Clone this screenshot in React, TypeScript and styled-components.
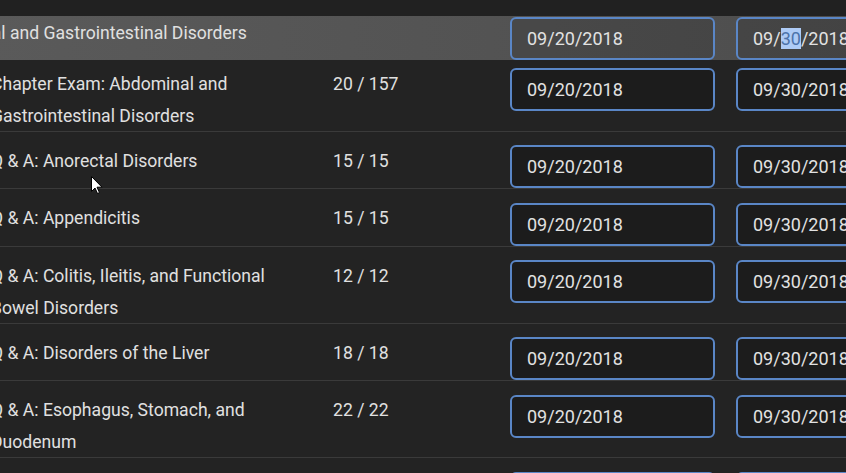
import React from "react";
import styled, { createGlobalStyle } from "styled-components";

const GlobalStyle = createGlobalStyle`
  html, body { margin: 0; padding: 0; background: #232323; overflow: hidden; }
  * { box-sizing: border-box; }
`;

const Page = styled.div`
  position: relative;
  width: 846px;
  height: 473px;
  overflow: hidden;
  background: #232323;
  font-family: Roboto, "Liberation Sans", sans-serif;
  color: #e0e0e0;
`;

const TopStrip = styled.div`
  height: 16px;
  background: #212121;
`;

const Table = styled.div`
  margin-left: -9px;
  width: 1000px;
`;

const cols = "342px 177px 226px 226px";

const HeaderRow = styled.div`
  position: relative;
  z-index: 1;
  display: grid;
  grid-template-columns: ${cols};
  height: 44px;
  background: linear-gradient(90deg, #5a5a5a 0%, #535353 50%, #4b4b4b 100%);
`;

const HeaderTitle = styled.div`
  padding-top: 1px;
  font-size: 17.6px;
  line-height: 32px;
  white-space: nowrap;
  margin-left: -70px;
`;

const Body = styled.div`
  margin-top: -5px;
`;

const Row = styled.div`
  display: grid;
  grid-template-columns: ${cols};
  border-bottom: 1px solid #3a3a3a;
`;

const TitleCell = styled.div`
  padding: 13px 18px 0 0;
  margin-bottom: -1px;
  font-size: 17.6px;
  line-height: 32px;
`;

const CountCell = styled.div`
  padding-top: 13px;
  font-size: 17.6px;
  line-height: 32px;
`;

const InputCell = styled.div<{ $top: number }>`
  padding-top: ${(p) => p.$top}px;
`;

const DateField = styled.div<{ $onHeader?: boolean }>`
  width: 205px;
  height: 43px;
  border: 2px solid #5a86c6;
  border-radius: 6px;
  background: ${(p) => (p.$onHeader ? "rgba(0,0,0,0.12)" : "#1c1c1c")};
  padding-left: 15px;
  font-size: 18px;
  line-height: 39px;
  color: #e2e2e2;
  white-space: nowrap;
`;

const Selected = styled.span`
  background: #aecbf6;
  color: #4d73aa;
`;

const Cursor = styled.svg`
  position: absolute;
  left: 91px;
  top: 176px;
  z-index: 2;
`;

const rows = [
  { title: "Chapter Exam: Abdominal and Gastrointestinal Disorders", count: "20 / 157" },
  { title: "Q & A: Anorectal Disorders", count: "15 / 15" },
  { title: "Q & A: Appendicitis", count: "15 / 15" },
  { title: "Q & A: Colitis, Ileitis, and Functional Bowel Disorders", count: "12 / 12" },
  { title: "Q & A: Disorders of the Liver", count: "18 / 18" },
  { title: "Q & A: Esophagus, Stomach, and Duodenum", count: "22 / 22" },
  { title: "Q & A: Gallbladder and Bile Ducts", count: "14 / 14" },
];

export default function App() {
  return (
    <Page>
      <GlobalStyle />
      <TopStrip />
      <Table>
        <HeaderRow>
          <HeaderTitle>Abdominal and Gastrointestinal Disorders</HeaderTitle>
          <div />
          <InputCell $top={1}>
            <DateField $onHeader>09/20/2018</DateField>
          </InputCell>
          <InputCell $top={1}>
            <DateField $onHeader>
              09/<Selected>30</Selected>/2018
            </DateField>
          </InputCell>
        </HeaderRow>
        <Body>
          {rows.map((r) => (
            <Row key={r.title}>
              <TitleCell>{r.title}</TitleCell>
              <CountCell>{r.count}</CountCell>
              <InputCell $top={13.4}>
                <DateField>09/20/2018</DateField>
              </InputCell>
              <InputCell $top={13.4}>
                <DateField>09/30/2018</DateField>
              </InputCell>
            </Row>
          ))}
        </Body>
      </Table>
      <Cursor width="12" height="19" viewBox="0 0 12 19">
        <path d="M0.5 0.5 L0.5 15.5 L4 12 L6.5 17.5 L8.5 16.6 L6 11.2 L11 11.2 Z" fill="#fff" stroke="#000" strokeWidth="1" />
      </Cursor>
    </Page>
  );
}
